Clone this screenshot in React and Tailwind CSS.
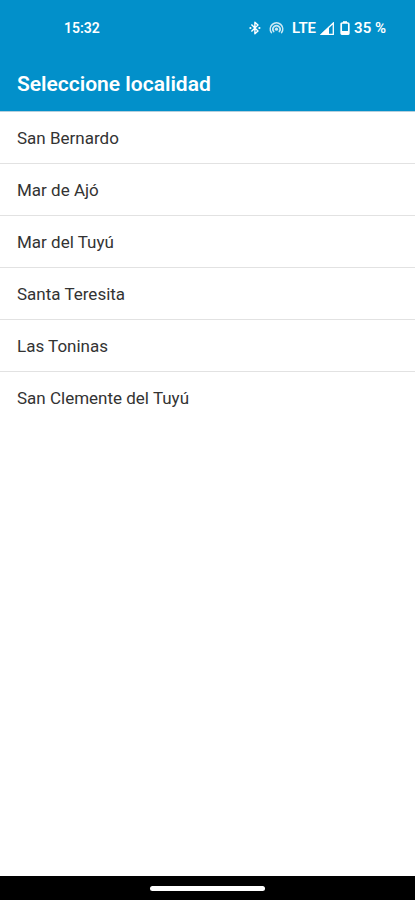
import React, { useState } from 'react'

const localidades = [
  'San Bernardo',
  'Mar de Ajó',
  'Mar del Tuyú',
  'Santa Teresita',
  'Las Toninas',
  'San Clemente del Tuyú',
]

function BluetoothIcon() {
  return (
    <svg width="12" height="14" viewBox="0 0 12 14" fill="none" stroke="currentColor" strokeWidth="1.4" aria-hidden="true">
      <path d="M2.4 3.6 9 10 5.9 12.8V1.2L9 4 2.4 10.4" strokeLinejoin="round" />
      <circle cx="1.4" cy="7" r="1.1" fill="currentColor" stroke="none" />
      <circle cx="10.4" cy="7" r="1.1" fill="currentColor" stroke="none" />
    </svg>
  )
}

function HotspotIcon() {
  return (
    <svg width="15" height="14" viewBox="0 0 15 14" fill="none" stroke="currentColor" strokeWidth="1.6" strokeLinecap="round" aria-hidden="true">
      <path d="M2.4 11.6A6.2 6.2 0 1 1 12.6 11.6" />
      <path d="M4.7 10.6A3.6 3.6 0 1 1 10.3 10.6" />
      <circle cx="7.5" cy="8.2" r="1.6" fill="currentColor" stroke="none" />
    </svg>
  )
}

function SignalIcon() {
  return (
    <svg width="14" height="13" viewBox="0 0 14 13" aria-hidden="true">
      <path d="M13.3 1V12.3H1.4Z" fill="none" stroke="currentColor" strokeWidth="1.3" />
      <path d="M9 4.6V12.8H0.4Z" fill="currentColor" />
    </svg>
  )
}

function BatteryIcon() {
  return (
    <svg width="10" height="14" viewBox="0 0 10 14" aria-hidden="true">
      <path d="M3 0.2H7V2H3Z" fill="currentColor" />
      <rect x="1.2" y="2" width="7.6" height="11.2" rx="1" fill="none" stroke="currentColor" strokeWidth="1.7" />
      <path d="M1.5 10H8.5V13H1.5Z" fill="currentColor" />
    </svg>
  )
}

function StatusBar() {
  return (
    <div className="flex h-14 items-center justify-between pr-[29px] pl-16 text-[15px] font-semibold">
      <span className="text-sm">15:32</span>
      <div className="flex items-center">
        <BluetoothIcon />
        <span className="ml-2 flex opacity-80"><HotspotIcon /></span>
        <span className="ml-2">LTE</span>
        <span className="ml-1 flex"><SignalIcon /></span>
        <span className="ml-1.5 flex"><BatteryIcon /></span>
        <span className="ml-1">35 %</span>
      </div>
    </div>
  )
}

function App() {
  const [selected, setSelected] = useState(null)

  return (
    <div className="flex min-h-screen flex-col bg-white font-['Roboto',sans-serif]">
      <header className="border-b border-[#b5cfdc] bg-[#0290ca] text-white">
        <StatusBar />
        <h1 className="flex h-[55px] items-center px-[17px] pt-0.5 text-[21px] font-semibold">Seleccione localidad</h1>
      </header>

      <main className="flex-1">
        <ul className="divide-y divide-[#e2e2e2]">
          {localidades.map((localidad) => (
            <li key={localidad}>
              <button
                type="button"
                aria-pressed={selected === localidad}
                onClick={() => setSelected(localidad)}
                className="flex h-[51px] w-full items-center px-[17px] pt-0.5 text-left text-[17px] text-[#333333]"
              >
                {localidad}
              </button>
            </li>
          ))}
        </ul>
      </main>

      <footer className="flex h-6 items-center justify-center bg-black">
        <div className="h-[5px] w-[115px] rounded-full bg-white" />
      </footer>
    </div>
  )
}

export default App
